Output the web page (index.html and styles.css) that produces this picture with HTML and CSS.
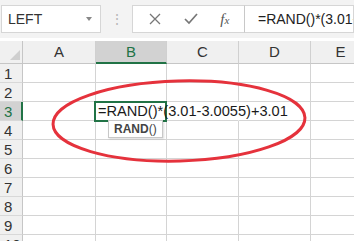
FILE: index.html
```html
<!DOCTYPE html>
<html lang="en">
<head>
    <meta charset="UTF-8">
    <title>Sheet</title>
    <link rel="stylesheet" href="styles.css">
</head>
<body>
    <div class="toolbar">
        <div class="name-box">
            <span>LEFT</span>
            <span class="caret"></span>
        </div>
        <div class="grip">⋮</div>
        <div class="fx-buttons">
            <svg width="14" height="14" viewBox="0 0 14 14"><path d="M2 2 L12 12 M12 2 L2 12" stroke="#777" stroke-width="1.3" fill="none"/></svg>
            <svg width="16" height="14" viewBox="0 0 16 14"><path d="M2 7 L6 11 L14 2" stroke="#777" stroke-width="1.7" fill="none"/></svg>
            <span class="fx">f<small>x</small></span>
        </div>
        <div class="formula">=RAND()*(3.01-3.0055)+3.01</div>
    </div>

    <div class="sheet">
        <div class="grid">
            <div class="corner"><span class="tri"></span></div>
            <div class="col-head">A</div>
            <div class="col-head active">B</div>
            <div class="col-head">C</div>
            <div class="col-head">D</div>
            <div class="col-head">E</div>

            <div class="row-head">1</div><div class="cell"></div><div class="cell"></div><div class="cell"></div><div class="cell"></div><div class="cell"></div>
            <div class="row-head">2</div><div class="cell"></div><div class="cell"></div><div class="cell"></div><div class="cell"></div><div class="cell"></div>
            <div class="row-head active">3</div><div class="cell"></div><div class="cell selected"><span class="entry">=RAND()*(3.01-3.0055)+3.01</span></div><div class="cell no-right"></div><div class="cell"></div><div class="cell"></div>
            <div class="row-head">4</div><div class="cell"></div><div class="cell"></div><div class="cell"></div><div class="cell"></div><div class="cell"></div>
            <div class="row-head">5</div><div class="cell"></div><div class="cell"></div><div class="cell"></div><div class="cell"></div><div class="cell"></div>
            <div class="row-head">6</div><div class="cell"></div><div class="cell"></div><div class="cell"></div><div class="cell"></div><div class="cell"></div>
            <div class="row-head">7</div><div class="cell"></div><div class="cell"></div><div class="cell"></div><div class="cell"></div><div class="cell"></div>
            <div class="row-head">8</div><div class="cell"></div><div class="cell"></div><div class="cell"></div><div class="cell"></div><div class="cell"></div>
            <div class="row-head">9</div><div class="cell"></div><div class="cell"></div><div class="cell"></div><div class="cell"></div><div class="cell"></div>
            <div class="row-head">10</div><div class="cell"></div><div class="cell"></div><div class="cell"></div><div class="cell"></div><div class="cell"></div>
        </div>

        <div class="tip"><b>RAND</b>()</div>

        <!-- red marker ring -->
        <svg class="ring" width="354" height="200" viewBox="0 0 354 200">
            <ellipse cx="179" cy="80" rx="126" ry="40" transform="rotate(-1.5 179 80)" fill="none" stroke="#e5323c" stroke-width="3"/>
        </svg>
    </div>
</body>
</html>
```

FILE: styles.css
```css
* {
    margin: 0;
    padding: 0;
    box-sizing: border-box;
}

body {
    width: 354px;
    height: 241px;
    overflow: hidden;
    background: #fff;
    font-family: 'Liberation Sans', Arial, sans-serif;
    color: #222;
}

.toolbar {
    height: 38px;
    background: #f3f3f3;
    display: flex;
    align-items: center;
    padding-left: 1px;
}

.name-box {
    width: 100px;
    height: 28px;
    background: #fff;
    border: 1px solid #d6d6d6;
    display: flex;
    align-items: center;
    justify-content: space-between;
    padding: 0 8px 0 6px;
    font-size: 14px;
    color: #333;
}

.caret {
    border-left: 3px solid transparent;
    border-right: 3px solid transparent;
    border-top: 4px solid #888;
}

.grip {
    width: 31px;
    text-align: center;
    color: #b8b8b8;
    font-size: 14px;
}

.fx-buttons {
    width: 113px;
    height: 28px;
    background: #fff;
    border: 1px solid #d6d6d6;
    display: flex;
    align-items: center;
    justify-content: space-around;
    padding: 0 4px;
}

.fx {
    font-family: 'Liberation Serif', serif;
    font-style: italic;
    font-size: 15px;
    color: #555;
}

.fx small {
    font-size: 11px;
}

.formula {
    flex: 1;
    height: 28px;
    background: #fff;
    border: 1px solid #d6d6d6;
    border-left-color: #c8c8c8;
    margin-left: -1px;
    padding-left: 13px;
    font-size: 14px;
    line-height: 26px;
    white-space: nowrap;
    overflow: hidden;
    color: #222;
}

.sheet {
    position: relative;
    margin-top: 3px;
}

.grid {
    display: grid;
    grid-template-columns: 23px 73px 71px 72px 72px 60px;
    grid-template-rows: 23px repeat(10, 19px);
}

.corner {
    background: #f0f0f0;
    border-right: 1px solid #c6c6c6;
    border-bottom: 1px solid #c6c6c6;
    position: relative;
}

.tri {
    position: absolute;
    right: 2px;
    bottom: 3px;
    border-left: 10px solid transparent;
    border-bottom: 10px solid #cfcfcf;
}

.col-head {
    background: #f0f0f0;
    border-right: 1px solid #d0d0d0;
    border-bottom: 1px solid #c6c6c6;
    text-align: center;
    font-size: 15px;
    line-height: 22px;
    color: #333;
}

.col-head.active {
    background: #d2d2d2;
    border-bottom: 2px solid #217346;
    color: #217346;
}

.row-head {
    background: #f0f0f0;
    border-right: 1px solid #c6c6c6;
    border-bottom: 1px solid #d8d8d8;
    font-size: 15px;
    line-height: 19px;
    padding-left: 4px;
    color: #333;
    white-space: nowrap;
}

.row-head.active {
    background: #d2d2d2;
    border-right: 2px solid #217346;
    color: #217346;
}

.cell {
    border-right: 1px solid #d4d4d4;
    border-bottom: 1px solid #d4d4d4;
}

.cell.no-right {
    border-right-color: transparent;
}

.cell.selected {
    border: 2px solid #217346;
    margin: -1px 0 -1px -2px;
    position: relative;
    z-index: 1;
}

.entry {
    display: block;
    white-space: nowrap;
    font-size: 14.6px;
    line-height: 17px;
    padding-left: 2px;
    color: #1a1a1a;
}

.tip {
    position: absolute;
    left: 108px;
    top: 79px;
    height: 18px;
    padding: 0 5px;
    background: #fff;
    border: 1px solid #c8c8c8;
    box-shadow: 1px 1px 2px rgba(0, 0, 0, 0.15);
    font-size: 12px;
    line-height: 16px;
    color: #444;
    z-index: 2;
}

.ring {
    position: absolute;
    left: 0;
    top: 0;
    z-index: 3;
}
```
